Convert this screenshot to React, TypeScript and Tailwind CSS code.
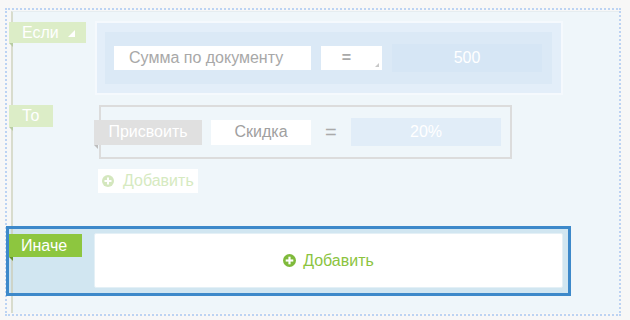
import React from 'react'

const font = { fontFamily: '"Liberation Sans", Arial, sans-serif' }

function Fold({ color }: { color: string }) {
  // little ribbon fold under a tag
  return (
    <svg className="absolute left-0 top-full" width="4" height="4" viewBox="0 0 4 4">
      <polygon points="0,0 4,0 4,4" fill={color} />
    </svg>
  )
}

function PlusCircle({ bg, size = 12 }: { bg: string; size?: number }) {
  return (
    <svg width={size} height={size} viewBox="0 0 12 12">
      <circle cx="6" cy="6" r="6" fill={bg} />
      <rect x="5" y="2.5" width="2" height="7" fill="#fff" />
      <rect x="2.5" y="5" width="7" height="2" fill="#fff" />
    </svg>
  )
}

export default function App() {
  return (
    <div className="h-[320px] w-[630px] bg-[#f7f7f7] pl-[5px] pt-[8px] text-[16px]" style={font}>
      <div className="h-[308px] w-[616px] border-2 border-dotted border-[#bcd3f3] pl-[4px] pt-px">
        <div className="h-[302px] w-[608px] border-l-2 border-t border-l-[#d8dccd] border-t-[#e6edf0] bg-[#eff6fa]">
          {/* Если */}
          <div className="mt-[9px] flex items-start">
            <div className="relative -ml-[4px] mt-px flex h-[21px] w-[77px] shrink-0 items-center bg-[#dcedc7] pl-[13px] text-white">
              <span className="leading-none">Если</span>
              <svg className="ml-[9px] mt-[2px]" width="7" height="7" viewBox="0 0 7 7">
                <polygon points="7,0 7,7 0,7" fill="#fff" />
              </svg>
              <Fold color="#b8cca2" />
            </div>
            <div className="ml-[9px] flex h-[74px] w-[468px] items-center border-2 border-[#f5f9fd] bg-[#e3eef9] pl-[8px]">
              <div className="flex h-[52px] w-[447px] items-center gap-[10px] bg-[#dbe9f6] px-[9px]">
                <div className="flex h-[24px] w-[197px] items-center bg-white pl-[15px] text-[#a8a8a8]">
                  Сумма по документу
                </div>
                <div className="relative flex h-[24px] w-[61px] items-center justify-center bg-white pr-[10px] text-[16px] font-bold text-[#a9a9a9]">
                  =
                  <svg className="absolute bottom-[3px] right-[3px]" width="4" height="4" viewBox="0 0 4 4">
                    <polygon points="4,0 4,4 0,4" fill="#c8c8c8" />
                  </svg>
                </div>
                <div className="flex h-[28px] w-[150px] items-center justify-center bg-[#d6e6f5] text-white">500</div>
              </div>
            </div>
          </div>

          {/* То */}
          <div className="mt-[10px] flex items-start">
            <div className="relative -ml-[4px] flex h-[22px] w-[44px] shrink-0 items-center bg-[#dcedc7] pl-[13px] text-white">
              То
              <Fold color="#b8cca2" />
            </div>
            <div className="ml-[46px] flex h-[54px] w-[413px] items-center border-2 border-[#dcdcdc] bg-[#eff6fa]">
              <div className="relative -ml-[7px] flex h-[25px] w-[108px] items-center justify-center bg-[#e0e0e0] text-white">
                Присвоить
                <Fold color="#bdbdbd" />
              </div>
              <div className="ml-[9px] flex h-[25px] w-[100px] items-center justify-center bg-white text-[#a0a0a0]">
                Скидка
              </div>
              <div className="ml-[14px] w-[10px] text-[20px] leading-none text-[#aaaaaa]">=</div>
              <div className="ml-[16px] flex h-[28px] w-[150px] items-center justify-center bg-[#e1edf8] text-white">20%</div>
            </div>
          </div>
          <div className="ml-[85px] mt-[10px] flex h-[24px] w-[100px] items-center gap-[9px] bg-white pl-[4px] text-[#d6eac1]">
            <PlusCircle bg="#d4e7be" />
            Добавить
          </div>

          {/* Иначе */}
          <div className="-ml-[7px] mt-[33px] h-[70px] w-[565px] border-[3px] border-[#3d89ca] bg-[#d1e6f1] pl-[2px]">
            <div className="flex h-full items-start border-l-2 border-[#cdd4c8]">
              <div className="relative -ml-[4px] mt-[5px] flex h-[23px] w-[73px] shrink-0 items-center bg-[#8dc63f] pl-[12px] text-white">
                Иначе
                <Fold color="#66912e" />
              </div>
              <div className="ml-[12px] mt-[4px] flex h-[55px] w-[469px] items-center justify-center gap-[7px] rounded-[2px] border border-[#e4f0f6] bg-white text-[#8cc43f]">
                <PlusCircle bg="#7fba3b" size={13} />
                Добавить
              </div>
            </div>
          </div>
        </div>
      </div>
    </div>
  )
}
